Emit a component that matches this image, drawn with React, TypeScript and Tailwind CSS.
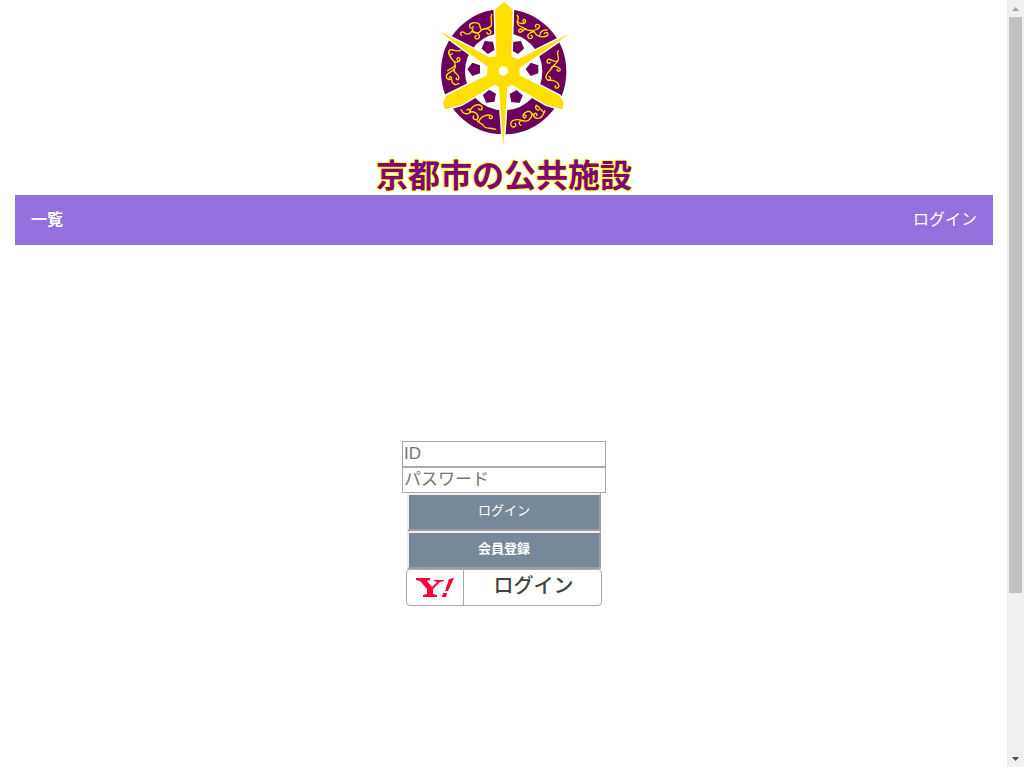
import React from "react";

const PENTAGONS: [number, number, number][] = [
  [176, 141, -32],
  [263, 141, 30],
  [309, 208, -90],
  [259, 291, 150],
  [180, 290, -150],
  [134, 208, -90],
];

const SCROLLS = [
  "M186 44C180 56 190 70 184 78C176 88 164 82 156 90C150 98 140 102 130 96",
  "M156 90C148 84 154 74 146 70C134 66 118 68 120 80C122 88 132 86 130 79",
  "M160 88C168 84 184 88 184 97C182 105 170 103 172 97",
  "M132 96C124 90 134 82 128 92C120 106 108 104 104 98C96 92 88 100 96 106",
  "M130 96C146 96 154 108 146 116C136 121 132 109 140 107",
  "M262 46C272 54 260 64 264 72C270 82 278 80 286 86C294 94 306 90 314 96",
  "M262 64C270 74 290 72 288 62C284 54 276 62 282 66",
  "M288 86C280 90 276 100 268 96C264 88 274 84 278 90",
  "M300 91C314 92 330 88 330 77C324 69 312 75 319 82",
  "M312 95C296 98 290 108 298 115C308 118 312 108 304 106",
  "M314 96C322 112 342 114 354 106C358 98 348 94 344 101M330 106C330 94 344 88 352 90",
  "M94 150C82 160 66 142 58 152C54 162 62 168 68 161",
  "M58 156C56 172 72 178 76 190C78 204 62 204 54 212",
  "M76 186C86 188 94 182 90 174C82 170 80 178 84 181",
  "M77 196C80 216 54 212 50 228C50 240 62 242 66 234C64 228 58 230 59 234",
  "M74 207C68 220 88 220 88 234C86 242 78 240 80 234M66 238C66 252 78 258 88 250",
  "M386 152C378 162 392 170 384 184C376 194 366 200 362 210",
  "M384 182C374 190 364 176 356 178C348 184 354 193 361 188",
  "M364 204C370 194 386 200 392 208C390 216 380 214 383 208",
  "M362 210C350 220 344 234 354 240C364 242 366 232 358 230",
  "M356 241C370 240 386 244 388 258C384 269 372 264 378 257",
  "M94 329C100 342 112 344 120 338C126 332 118 324 112 330",
  "M120 338C122 320 142 308 156 318C162 328 150 334 147 326",
  "M122 336C136 332 150 346 144 356C138 362 126 356 132 348",
  "M142 358C142 374 160 366 162 378C168 388 184 382 198 388",
  "M148 365C152 346 180 340 188 350C188 358 176 357 179 350",
  "M346 332C340 340 342 350 330 354C320 358 312 352 312 345C314 336 325 340 321 346",
  "M344 338C334 332 330 320 320 316C314 322 320 332 328 330",
  "M314 348C306 344 306 332 294 334C280 338 276 348 284 354C292 352 290 344 284 345",
  "M308 342C304 360 292 366 280 362C266 360 266 374 274 376",
  "M282 363C258 354 240 360 244 376C250 386 264 378 256 370",
];

function Emblem() {
  return (
    <svg viewBox="-2 0 450 450" className="size-[150px]" role="img" aria-label="京都市">
      <circle cx="222" cy="215" r="152" fill="none" stroke="#6b005f" strokeWidth="72" />
      <g fill="none" stroke="#ffdf00" strokeWidth="4" strokeLinecap="round">
        {SCROLLS.map((d) => (
          <path key={d} d={d} />
        ))}
      </g>
      <g fill="#6b005f">
        {PENTAGONS.map(([x, y, angle]) => (
          <polygon
            key={`${x}-${y}`}
            points="0,-21 20,-6 12,17 -12,17 -20,-6"
            transform={`translate(${x} ${y}) rotate(${angle})`}
          />
        ))}
      </g>
      <path
        d="M224 5L249 29L245 169L265 178L419 101L269 205L270 226L389 287L402 306L398 328L350 314L247 254L233 262L221 438L208 262L195 254L95 314L46 328L40 311L49 287L172 226L174 200L27 93L178 171L200 169L196 29Z"
        fill="#ffdf00"
        stroke="#fff"
        strokeWidth="9"
        strokeMiterlimit="2"
        paintOrder="stroke"
      />
      <circle cx="221" cy="213" r="14" fill="#fff" />
    </svg>
  );
}

function YahooMark() {
  return (
    <svg viewBox="0 0 40 24" className="h-6 w-10" aria-hidden="true">
      <g fill="#ff0033">
        <path d="M1 2H15V4L12 5L17 11L22 6L19 5V4H29V5L25 6L18 13V18L22 19V21H8V19L12 18V13L5 5L1 4Z" />
        <path d="M34 3L39 2L33 15H30ZM28 17H32L31 21H27Z" />
      </g>
    </svg>
  );
}

function ScrollRail() {
  return (
    <div aria-hidden="true" className="flex w-[17px] shrink-0 flex-col items-center bg-[#f0f0f0]">
      <svg viewBox="0 0 17 17" className="size-[17px] shrink-0">
        <path d="M5 11L8.500 7L12 11Z" fill="#a3a3a3" />
      </svg>
      <div className="w-[13px] grow-[576] bg-[#c1c1c1]" />
      <div className="grow-[157]" />
      <svg viewBox="0 0 17 17" className="size-[17px] shrink-0">
        <path d="M5 7L8.500 11L12 7Z" fill="#505050" />
      </svg>
    </div>
  );
}

const outline =
  "[text-shadow:1px_0_#ff0,-1px_0_#ff0,0_1px_#ff0,0_-1px_#ff0]";
const field =
  "h-[26px] w-[204px] border border-[#a9a9a9] bg-white px-px text-[17px] text-black placeholder:text-[#757575]";
const action =
  "w-[194px] border-2 border-t-[#f0f0f0] border-r-[#a09c9c] border-b-[#a09c9c] border-l-[#f0f0f0] bg-[#778899] pb-0.5 text-[13px] text-white";

export default function App() {
  return (
    <div className="flex h-screen bg-white [font-family:'Liberation_Sans','Noto_Sans_CJK_JP',sans-serif]">
      <div className="min-w-0 flex-1 overflow-hidden pr-3.5 pl-[15px]">
        <header>
          <div className="flex flex-col items-center">
            <Emblem />
            <h1 className={`h-[45px] pt-[5px] text-[32px] leading-[42px] font-bold text-[#800080] ${outline}`}>
              京都市の公共施設
            </h1>
          </div>
          <nav className="flex h-[50px] items-center justify-between bg-[#9370db] px-4 text-base text-white">
            <a href="#list" className="font-bold">一覧</a>
            <a href="#login">ログイン</a>
          </nav>
        </header>
        <main className="pt-[196px]">
          <form className="flex flex-col items-center" onSubmit={(e) => e.preventDefault()}>
            <input aria-label="ID" placeholder="ID" className={field} />
            <input aria-label="パスワード" type="password" placeholder="パスワード" className={field} />
            <button type="submit" className={`${action} h-[38px]`}>ログイン</button>
            <button type="button" className={`${action} h-[38px] font-bold`}>会員登録</button>
            <button
              type="button"
              aria-label="Yahoo! ログイン"
              className="flex h-[37px] w-[196px] items-stretch rounded border border-[#a9a9a9] bg-white"
            >
              <span className="flex w-[57px] items-center justify-center border-r border-[#a9a9a9]">
                <YahooMark />
              </span>
              <span className="flex-1 pl-0.5 text-xl leading-8 font-medium text-[#434343]">ログイン</span>
            </button>
          </form>
        </main>
      </div>
      <ScrollRail />
    </div>
  );
}
